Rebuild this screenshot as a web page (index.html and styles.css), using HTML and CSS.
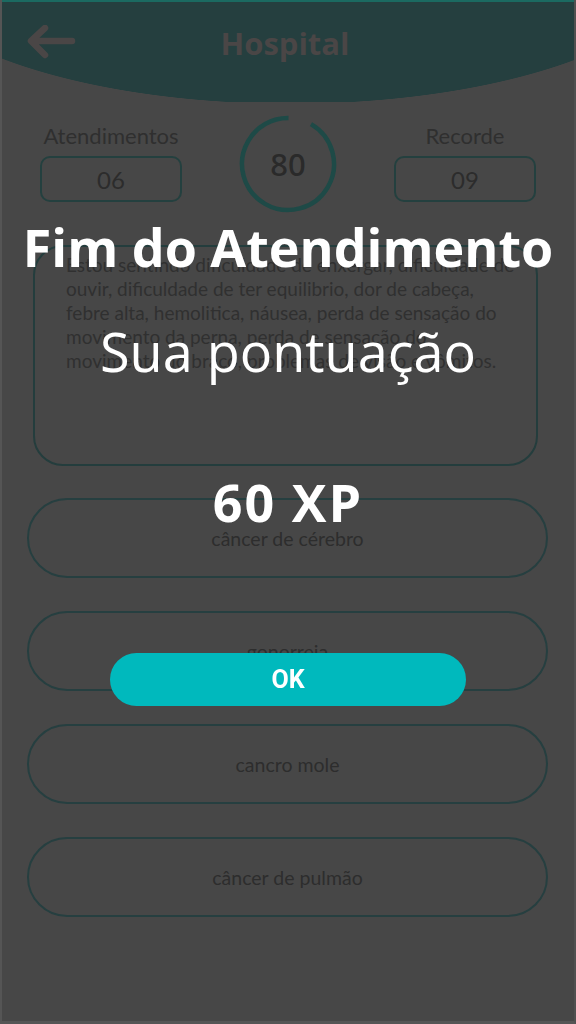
FILE: index.html
```html
<!DOCTYPE html>
<html lang="pt">
<head>
<meta charset="utf-8">
<title>Hospital</title>
<link rel="stylesheet" href="styles.css">
</head>
<body>
<div class="screen">
  <header class="header">
    <div class="header-row">
      <button class="back" aria-label="Voltar">
        <svg width="50" height="36" viewBox="0 0 50 36"><path d="M46 16 H6 M19 3 L5 16 L19 30" fill="none" stroke="#4a4646" stroke-width="6.5" stroke-linecap="round" stroke-linejoin="round"/></svg>
      </button>
      <h1 class="title">Hospital</h1>
      <span></span>
    </div>
  </header>

  <section class="stats">
    <div class="stat">
      <div class="stat-label">Atendimentos</div>
      <div class="stat-box">06</div>
    </div>
    <div class="ring">
      <svg width="98" height="98" viewBox="0 0 98 98">
        <circle cx="49" cy="49" r="46" fill="none" stroke="#1e4a47" stroke-width="4.5" stroke-dasharray="265 289" transform="rotate(-60 49 49)"/>
      </svg>
      <span class="ring-value">80</span>
    </div>
    <div class="stat">
      <div class="stat-label">Recorde</div>
      <div class="stat-box">09</div>
    </div>
  </section>

  <div class="symptoms">
    <p><span class="line">Estou sentindo dificuldade de enxergar, dificuldade de</span>
    <span class="line">ouvir, dificuldade de ter equilibrio, dor de cabeça,</span>
    <span class="line">febre alta, hemolitica, náusea, perda de sensação do</span>
    <span class="line">movimento da perna, perda de sensação do</span>
    <span class="line">movimento do braço, problemas de visão e vômitos.</span></p>
  </div>

  <div class="options">
    <div class="option">câncer de cérebro</div>
    <div class="option">gonorreia</div>
    <div class="option">cancro mole</div>
    <div class="option">câncer de pulmão</div>
  </div>

  <div class="dialog">
    <h2 class="dialog-title">Fim do Atendimento</h2>
    <p class="dialog-sub">Sua pontuação</p>
    <p class="dialog-score">60 XP</p>
    <button class="ok">OK</button>
  </div>
</div>
</body>
</html>
```

FILE: styles.css
```css
* { box-sizing: border-box; }
html, body { margin: 0; padding: 0; }
body { background: #474747; }

.screen {
  width: 576px;
  height: 1024px;
  background: #474747;
  border-left: 2px solid #555;
  border-right: 2px solid #505050;
  border-bottom: 3px solid #555;
  overflow: hidden;
  font-family: "Lato", "Noto Sans", sans-serif;
}

.header {
  height: 102px;
  margin: 0 -2px;
  border-top: 2px solid #1b6a61;
  background: radial-gradient(ellipse 400px 147px at 290px -45px, #253f3f 99.6%, transparent 100%);
}
.header-row {
  display: grid;
  grid-template-columns: 1fr auto 1fr;
  align-items: center;
  height: 44px;
  margin-top: 19px;
}
.back {
  justify-self: start;
  margin-left: 26px;
  padding: 0;
  border: 0;
  background: none;
  display: flex;
}
.title {
  margin: 0 6px 0 0;
  font-family: "Open Sans", sans-serif;
  font-weight: 700;
  font-size: 31px;
  color: #4a4646;
  line-height: 44px;
}

.stats {
  display: grid;
  grid-template-columns: 142px 1fr 142px;
  margin: 13px 38px 0 38px;
  height: 98px;
}
.stat {
  display: flex;
  flex-direction: column;
  align-items: center;
  padding-top: 8px;
}
.stat-label {
  font-size: 22px;
  line-height: 26px;
  color: #2f2f2f;
}
.stat-box {
  margin-top: 7px;
  width: 142px;
  height: 46px;
  border: 2px solid #24403f;
  border-radius: 10px;
  display: flex;
  align-items: center;
  justify-content: center;
  font-size: 24px;
  color: #2c2c2c;
}
.ring {
  justify-self: center;
  width: 98px;
  height: 98px;
  display: grid;
  place-items: center;
}
.ring svg, .ring-value { grid-area: 1 / 1; }
.ring-value {
  font-family: "Noto Sans", sans-serif;
  font-size: 31px;
  font-weight: 500;
  color: #2a2a2a;
}

.symptoms {
  margin: 32px 0 0 31px;
  width: 505px;
  height: 221px;
  border: 2px solid #243d3d;
  border-radius: 30px;
  padding: 6px 10px 0 31px;
}
.symptoms p {
  margin: 0;
  font-size: 19px;
  line-height: 24px;
  color: #303030;
}
.line {
  display: block;
  white-space: nowrap;
}

.options {
  display: flex;
  flex-direction: column;
  gap: 33px;
  margin: 32px 0 0 25px;
  width: 521px;
}
.option {
  height: 80px;
  border: 2px solid #263f40;
  border-radius: 40px;
  display: flex;
  align-items: center;
  justify-content: center;
  font-size: 19.5px;
  color: #2d2d2d;
}

.dialog {
  position: fixed;
  inset: 0;
  display: flex;
  flex-direction: column;
  align-items: center;
  color: #fff;
  font-family: "Open Sans", sans-serif;
  padding-top: 213px;
}
.dialog-title {
  margin: 0;
  font-size: 52px;
  font-weight: 700;
  line-height: 68px;
  white-space: nowrap;
}
.dialog-sub {
  margin: 36px 0 0;
  font-size: 54px;
  font-weight: 400;
  line-height: 68px;
}
.dialog-score {
  margin: 85px 0 0;
  font-size: 52px;
  font-weight: 700;
  line-height: 64px;
  letter-spacing: 2px;
}
.ok {
  margin-top: 119px;
  width: 356px;
  height: 53px;
  border: 0;
  border-radius: 27px;
  background: #00b9bd;
  color: #fff;
  font-family: "Roboto", sans-serif;
  font-weight: 700;
  font-size: 25px;
}
```
